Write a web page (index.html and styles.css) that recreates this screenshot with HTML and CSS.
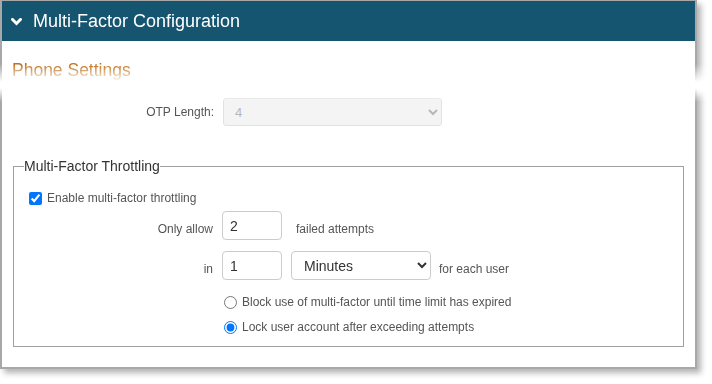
FILE: index.html
```html
<!DOCTYPE html>
<html>
<head>
<meta charset="utf-8">
<link rel="stylesheet" href="styles.css">
</head>
<body>
<div class="page">
  <div class="fade fade-top">
    <div class="panel panel-top">
      <div class="panel-header">
        <svg class="chev" width="11" height="8" viewBox="0 0 11 8"><polyline points="1.5,1.5 5.5,5.5 9.5,1.5" fill="none" stroke="#fff" stroke-width="3" stroke-linecap="square"/></svg>
        <span class="title">Multi-Factor Configuration</span>
      </div>
      <h2 class="section-title">Phone Settings</h2>
    </div>
  </div>
  <div class="fade fade-bottom">
    <div class="panel panel-bottom">
      <div class="otp-row">
        <label class="otp-label">OTP Length:</label>
        <select class="otp-select" disabled><option>4</option></select>
      </div>
      <fieldset class="throttle">
        <legend>Multi-Factor Throttling</legend>
        <label class="check-row"><input type="checkbox" checked> <span>Enable multi-factor throttling</span></label>
        <div class="row row-allow">
          <span class="lbl">Only allow</span>
          <input class="num" type="text" value="2">
          <span class="after after-wide">failed attempts</span>
        </div>
        <div class="row row-in">
          <span class="lbl">in</span>
          <input class="num" type="text" value="1">
          <select class="unit"><option>Minutes</option></select>
          <span class="after">for each user</span>
        </div>
        <label class="radio-row r1"><input type="radio" name="act"> <span>Block use of multi-factor until time limit has expired</span></label>
        <label class="radio-row r2"><input type="radio" name="act" checked> <span>Lock user account after exceeding attempts</span></label>
      </fieldset>
    </div>
  </div>
</div>
</body>
</html>
```
FILE: styles.css
```css
html, body {
  margin: 0;
  padding: 0;
  background: #fff;
}
body {
  font-family: "Liberation Sans", Arial, sans-serif;
  color: #555;
}
.page {
  width: 712px;
}
.fade {
  width: 697px;
  padding: 0 10px 10px 0;
}
.fade-top {
  height: 88px;
  padding-bottom: 0;
  -webkit-mask-image: linear-gradient(to bottom, #000 0, #000 64px, transparent 82px);
  mask-image: linear-gradient(to bottom, #000 0, #000 64px, transparent 82px);
}
.fade-bottom {
  -webkit-mask-image: linear-gradient(to bottom, transparent 0, #000 14px);
  mask-image: linear-gradient(to bottom, transparent 0, #000 14px);
}
.panel {
  box-sizing: border-box;
  width: 697px;
  border-left: 2px solid #a8a8a8;
  border-right: 2px solid #a8a8a8;
  background: #fff;
  box-shadow: 4px 4px 6px rgba(0, 0, 0, 0.3);
}
.panel-top {
  height: 88px;
  border-top: 1px solid #a8a8a8;
}
.panel-header {
  height: 40px;
  background: #16556f;
  display: flex;
  align-items: center;
  padding-left: 9px;
}
.chev {
  display: block;
  margin-right: 11px;
  margin-top: 1px;
}
.title {
  color: #fff;
  font-size: 18px;
  line-height: 20px;
}
.section-title {
  margin: 19px 0 0 10px;
  font-weight: normal;
  font-size: 17.5px;
  line-height: 20px;
  color: #c0701c;
}
.panel-bottom {
  border-bottom: 2px solid #a8a8a8;
  padding: 10px 11px 20px 11px;
}
.otp-row {
  display: flex;
  align-items: center;
  height: 28px;
  margin-left: -11px;
}
.otp-label {
  width: 212px;
  text-align: right;
  font-size: 12px;
  color: #555;
}
.otp-select {
  margin-left: 9px;
  width: 219px;
  height: 28px;
  border: 1px solid #d6d6d6;
  border-radius: 3px;
  background: #f0f0f0;
  color: #999;
  font-family: inherit;
  font-size: 13px;
  padding-left: 7px;
}
.throttle {
  margin: 32px 0 0 0;
  border: 1px solid #a0a0a0;
  padding: 0 10px 11px 10px;
  min-width: 0;
}
.throttle legend {
  padding: 0;
  font-size: 14px;
  line-height: 16px;
  color: #333;
}
.check-row {
  display: flex;
  align-items: center;
  height: 14px;
  margin-top: 17px;
  font-size: 12px;
}
.check-row input {
  margin: 0 5px 0 5px;
  width: 13px;
  height: 13px;
}
.row {
  display: flex;
  align-items: center;
  height: 29px;
  font-size: 12px;
}
.row-allow {
  margin-top: 6px;
}
.row-in {
  margin-top: 11px;
}
.lbl {
  width: 189px;
  text-align: right;
  margin-top: 6px;
}
.num {
  box-sizing: border-box;
  margin-left: 9px;
  width: 60px;
  height: 29px;
  border: 1px solid #ccc;
  border-radius: 4px;
  padding: 0 7px;
  font-family: inherit;
  font-size: 14px;
  color: #333;
}
.unit {
  box-sizing: border-box;
  margin-left: 9px;
  width: 140px;
  height: 29px;
  border: 1px solid #ccc;
  border-radius: 4px;
  background: #fff;
  font-family: inherit;
  font-size: 14px;
  color: #333;
  padding-left: 8px;
}
.after {
  margin-left: 8px;
  margin-top: 6px;
}
.after-wide {
  margin-left: 14px;
}
.radio-row {
  display: flex;
  align-items: center;
  height: 16px;
  margin-left: 200px;
  font-size: 12px;
}
.radio-row input {
  margin: 0 5px 0 0;
  width: 13px;
  height: 13px;
}
.r1 {
  margin-top: 14px;
}
.r2 {
  margin-top: 9px;
}
```
